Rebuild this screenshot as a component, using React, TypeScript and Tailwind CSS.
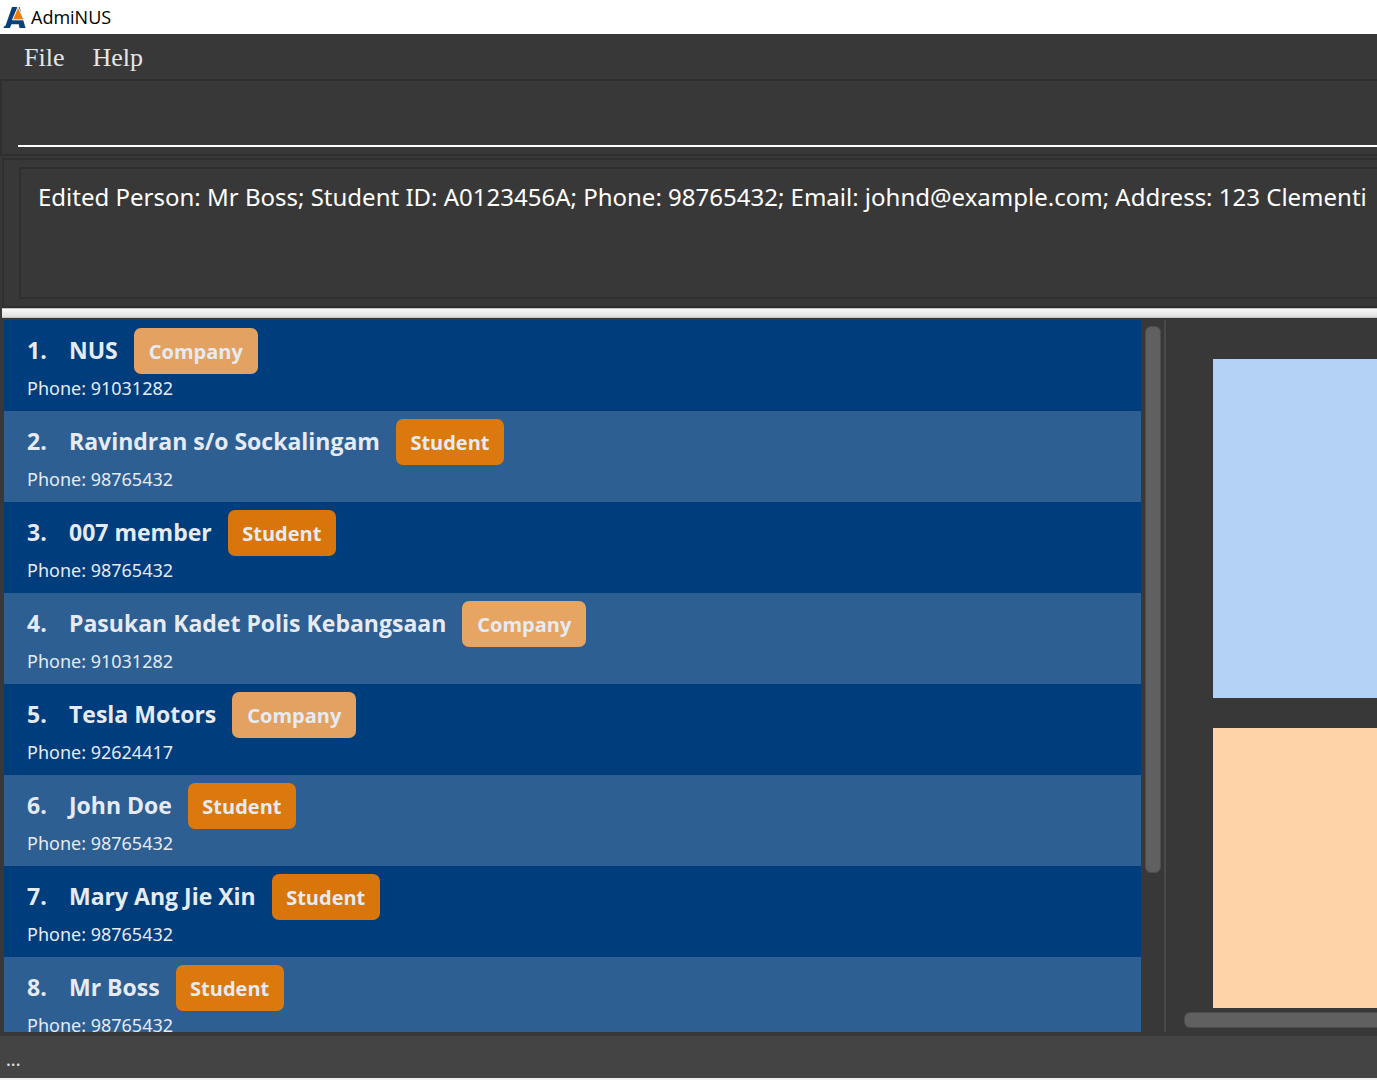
import React from "react";

type Kind = "Company" | "Student";

interface Contact {
  name: string;
  kind: Kind;
  phone: string;
}

const contacts: Contact[] = [
  { name: "NUS", kind: "Company", phone: "91031282" },
  { name: "Ravindran s/o Sockalingam", kind: "Student", phone: "98765432" },
  { name: "007 member", kind: "Student", phone: "98765432" },
  { name: "Pasukan Kadet Polis Kebangsaan", kind: "Company", phone: "91031282" },
  { name: "Tesla Motors", kind: "Company", phone: "92624417" },
  { name: "John Doe", kind: "Student", phone: "98765432" },
  { name: "Mary Ang Jie Xin", kind: "Student", phone: "98765432" },
  { name: "Mr Boss", kind: "Student", phone: "98765432" },
];

const badgeStyles: Record<Kind, string> = {
  Company: "w-[124px] bg-[#fcad5f]/90",
  Student: "w-[108px] bg-[#f07c00]/90",
};

function Logo() {
  return (
    <svg viewBox="0 0 24 24" className="size-6" aria-hidden="true">
      <path
        d="M9 2h7.500L22.500 23H16.500L15.800 19.200H8.500L6.800 23H0.500L1.200 21.200 2.600 20.600Z"
        fill="#0b3f7c"
      />
      <path d="M15 2 21 14.800 9.500 14.800Z" fill="#f07c00" stroke="#fff" strokeWidth="1" />
    </svg>
  );
}

function ContactRow({ contact, index }: { contact: Contact; index: number }) {
  return (
    <li className="h-[91px] shrink-0 pt-2 pl-[23px] text-[#e6ebf3] odd:bg-[#003d7c] even:bg-[#2d5f93]">
      <div className="flex h-[46px] items-center font-['Open_Sans',sans-serif] text-[23px] font-bold">
        <span className="w-[42px] shrink-0 pb-[2px]">{index}.</span>
        <span className="pb-[2px] whitespace-nowrap">{contact.name}</span>
        <span
          className={`ml-4 flex h-full shrink-0 items-center justify-center rounded-[7px] pt-px text-xl ${badgeStyles[contact.kind]}`}
        >
          {contact.kind}
        </span>
      </div>
      <p className="text-lg leading-7">Phone: {contact.phone}</p>
    </li>
  );
}

export default function App() {
  return (
    <div className="flex h-screen flex-col overflow-hidden bg-[#383838] font-['Noto_Sans',sans-serif]">
      <header className="flex h-[34px] shrink-0 items-center gap-1 bg-white pl-[3px] font-['Open_Sans',sans-serif] text-black">
        <Logo />
        <h1 className="text-lg">AdmiNUS</h1>
      </header>

      <nav className="flex h-[45px] shrink-0 items-center gap-7 pt-[2px] pl-6 font-['Liberation_Serif',serif] text-[26px] text-[#e6e6e6]">
        <button type="button">File</button>
        <button type="button">Help</button>
      </nav>

      <div className="flex h-[77px] shrink-0 flex-col justify-end border-y-2 border-l-2 border-[#2f2f2f] pb-[7px] pl-4">
        <input
          type="text"
          aria-label="Command"
          className="h-14 w-full border-b-2 border-white bg-transparent text-2xl text-white outline-none"
        />
      </div>

      <div className="mt-[2px] ml-[2px] flex h-[150px] shrink-0 border-y-2 border-l-2 border-[#2f2f2f] pt-[7px] pb-[7px] pl-[15px]">
        <textarea
          readOnly
          wrap="off"
          aria-label="Result"
          className="w-full resize-none overflow-hidden border-y-2 border-l-2 border-[#2f2f2f] bg-transparent pt-3 pl-[17px] text-2xl text-white outline-none"
          value="Edited Person: Mr Boss; Student ID: A0123456A; Phone: 98765432; Email: johnd@example.com; Address: 123 Clementi"
        />
      </div>

      <div className="ml-[2px] h-[10px] shrink-0 border-y border-[#c4c4c4] bg-linear-to-b from-[#fafafa] to-[#dedede]" />

      <main className="mt-[2px] mb-1 flex min-h-0 flex-1 pl-1">
        <section className="flex w-[84.6%] shrink-0 gap-1 border-r-2 border-[#4a4a4a] pr-[3px]">
          <ol className="flex flex-1 flex-col overflow-hidden">
            {contacts.map((contact, i) => (
              <ContactRow key={contact.name} contact={contact} index={i + 1} />
            ))}
          </ol>
          <div className="w-4 pt-[6px]">
            <div className="h-[547px] rounded-md border border-[#4d4d4d] bg-[#606060]" />
          </div>
        </section>
        <section className="flex flex-1 flex-col overflow-hidden pt-[39px] pb-1 pl-[18px]">
          <div className="ml-[29px] h-[339px] shrink-0 bg-[#b4d2f6]" />
          <div className="mt-[30px] ml-[29px] flex-1 bg-[#fed3a8]" />
          <div className="mt-1 h-4 shrink-0 rounded-l-md border-y border-l border-[#4d4d4d] bg-[#606060]" />
        </section>
      </main>

      <footer className="h-11 shrink-0 border-b-2 border-[#f0f0f0] bg-[#444444] pt-[11px] pl-[6px] text-lg leading-6 text-[#e6e6e6]">
        ...
      </footer>
    </div>
  );
}
